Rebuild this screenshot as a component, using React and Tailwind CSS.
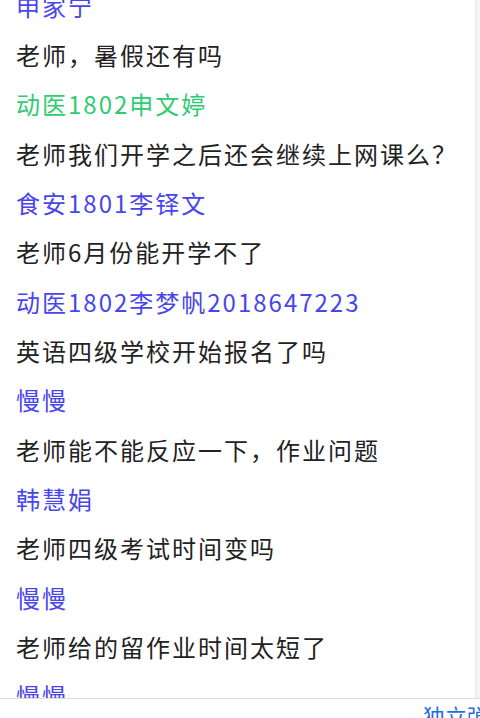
import React from 'react';

const messages = [
  { name: '申家宁', text: '老师，暑假还有吗' },
  { name: '动医1802申文婷', text: '老师我们开学之后还会继续上网课么？', green: true },
  { name: '食安1801李铎文', text: '老师6月份能开学不了' },
  { name: '动医1802李梦帆2018647223', text: '英语四级学校开始报名了吗' },
  { name: '慢慢', text: '老师能不能反应一下，作业问题' },
  { name: '韩慧娟', text: '老师四级考试时间变吗' },
  { name: '慢慢', text: '老师给的留作业时间太短了' },
  { name: '慢慢', text: '' },
];

export default function App() {
  return (
    <div
      className="flex flex-col h-[718px] w-[480px] overflow-hidden bg-white"
      style={{ fontFamily: '"Microsoft YaHei", "Noto Sans CJK SC", "Noto Sans", sans-serif' }}
    >
      <div className="flex flex-1 min-h-0">
        <div className="flex-1 overflow-hidden">
          <div className="mt-[-19px] pl-4">
            {messages.map((m, i) => (
              <div key={i}>
                <div
                  className={`h-[49.33px] flex items-center text-[24px] tracking-[2px] whitespace-nowrap ${
                    m.green ? 'text-[#2ecc71]' : 'text-[#4845ee]'
                  }`}
                >
                  {m.name}
                </div>
                {m.text && (
                  <div className="h-[49.33px] flex items-center text-[24px] tracking-[2px] text-[#222] whitespace-nowrap">
                    {m.text}
                  </div>
                )}
              </div>
            ))}
          </div>
        </div>
        <div className="w-[5px] bg-[#f4f4f4] border-l border-[#e8e8e8]" />
      </div>
      <div className="h-[20px] shrink-0 border-t border-[#dcdcdc] bg-white overflow-hidden pl-[423px] pt-[4px] whitespace-nowrap text-[22px] leading-[24px] text-[#1a6fe8]">
        独立弹窗
      </div>
    </div>
  );
}
